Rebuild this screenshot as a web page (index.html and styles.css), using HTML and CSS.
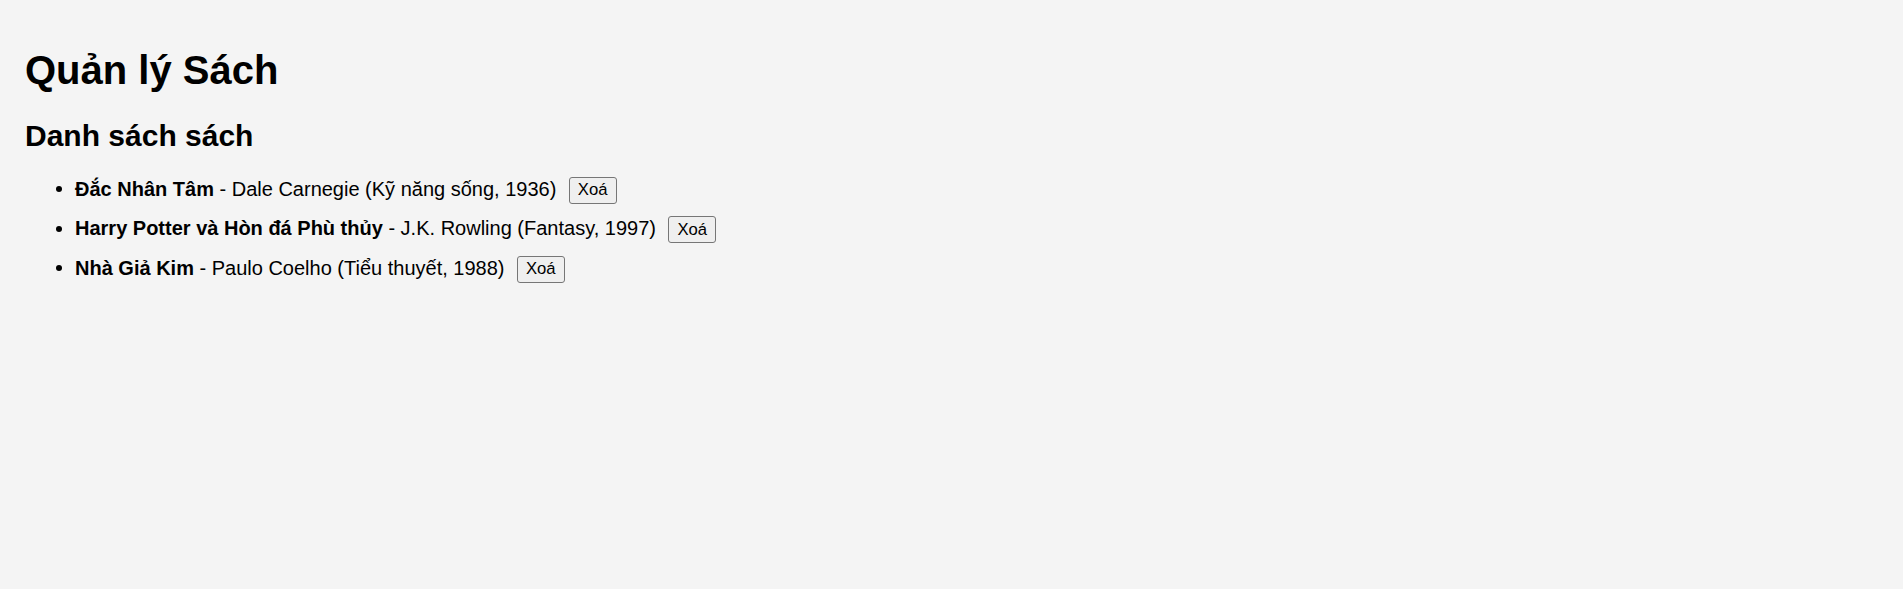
FILE: index.html
```html
<!DOCTYPE html>
<html lang="vi">
<head>
<meta charset="utf-8">
<title>Quản lý Sách</title>
<link rel="stylesheet" href="styles.css">
</head>
<body>
<div class="app">
  <h1 class="title">Quản lý Sách</h1>
  <h2 class="subtitle">Danh sách sách</h2>
  <ul class="book-list">
    <li class="book"><strong>Đắc Nhân Tâm</strong> - Dale Carnegie (Kỹ năng sống, 1936)<button class="delete">Xoá</button></li>
    <li class="book"><strong>Harry Potter và Hòn đá Phù thủy</strong> - J.K. Rowling (Fantasy, 1997)<button class="delete">Xoá</button></li>
    <li class="book"><strong>Nhà Giả Kim</strong> - Paulo Coelho (Tiểu thuyết, 1988)<button class="delete">Xoá</button></li>
  </ul>
</div>
</body>
</html>
```
FILE: styles.css
```css
html, body {
  margin: 0;
  background: #f4f4f4;
}
body {
  padding: 21.5px 25px 25px;
  font-family: "Liberation Sans", Arial, sans-serif;
  font-size: 20px;
  color: #000;
}
.title {
  font-size: 40px;
  font-weight: bold;
  margin: 26.8px 0 25.5px;
}
.subtitle {
  font-size: 30px;
  font-weight: bold;
  margin: 25px 0 23.8px;
}
.book-list {
  margin: 23.8px 0;
  padding-left: 50px;
}
.book {
  margin-bottom: 12.5px;
}
.delete {
  margin-left: 12.5px;
  font-family: "Liberation Sans", Arial, sans-serif;
  font-size: 16.67px;
  color: #000;
  background: #efefef;
  border: 1px solid #767676;
  border-radius: 3px;
  padding: 2.5px 8px;
}
```
